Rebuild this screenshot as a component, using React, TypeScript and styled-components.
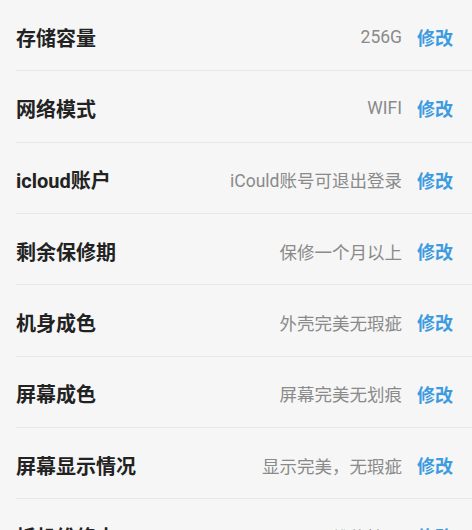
import React from "react";
import styled, { createGlobalStyle } from "styled-components";

const Global = createGlobalStyle`
  html, body { margin: 0; padding: 0; background: #f6f6f6; }
  body { font-family: Roboto, "Noto Sans CJK SC", sans-serif; overflow: hidden; }
`;

const List = styled.div`
  display: flex;
  flex-direction: column;
  padding-left: 16px;
  background: #f6f6f6;
  height: 530px;
  overflow: hidden;
`;

const Row = styled.div`
  box-sizing: border-box;
  flex: 0 0 71.33px;
  display: flex;
  align-items: center;
  padding: 4px 19px 0 0;
  border-bottom: 1px solid #e7e7e7;
`;

const Label = styled.div`
  flex: 1;
  font-size: 20px;
  font-weight: 700;
  color: #222;
  white-space: nowrap;
`;

const Value = styled.div`
  font-size: 17.5px;
  color: #8a8a8a;
  white-space: nowrap;
`;

const Edit = styled.div`
  margin-left: 15px;
  font-size: 18px;
  font-weight: 700;
  color: #3d9be0;
  white-space: nowrap;
`;

const rows = [
  ["存储容量", "256G"],
  ["网络模式", "WIFI"],
  ["icloud账户", "iCould账号可退出登录"],
  ["剩余保修期", "保修一个月以上"],
  ["机身成色", "外壳完美无瑕疵"],
  ["屏幕成色", "屏幕完美无划痕"],
  ["屏幕显示情况", "显示完美，无瑕疵"],
  ["拆机维修史", "无维修情况"],
];

export default function App() {
  return (
    <>
      <Global />
      <List>
        {rows.map(([l, v]) => (
          <Row key={l}>
            <Label>{l}</Label>
            <Value>{v}</Value>
            <Edit>修改</Edit>
          </Row>
        ))}
      </List>
    </>
  );
}
